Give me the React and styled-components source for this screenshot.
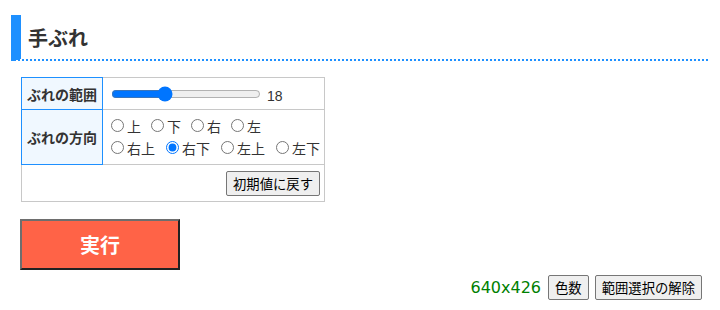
import React, { useState } from "react";
import styled, { createGlobalStyle } from "styled-components";

const Global = createGlobalStyle`
  html, body { margin: 0; padding: 0; background: #fff; }
  body {
    font-family: "Noto Sans CJK JP", "Noto Sans", sans-serif;
    font-size: 14px;
    color: #333;
  }
`;

const Page = styled.div`
  padding: 15px 12px 0 11px;
`;

const Heading = styled.h2`
  margin: 0;
  height: 44px;
  display: flex;
  align-items: center;
  padding-left: 7px;
  border-left: 10px solid #1e90ff;
  border-bottom: 2px dotted #1e90ff;
  font-size: 20px;
  font-weight: bold;
  color: #333;
`;

const Table = styled.table`
  margin: 16px 0 0 10px;
  border-collapse: collapse;
  width: 304px;
`;

const Th = styled.th`
  width: 70px;
  border: 1px solid #1e90ff;
  background: #f0f8ff;
  padding: 0 5px;
  font-size: 14px;
  font-weight: bold;
  text-align: left;
  white-space: nowrap;
  color: #333;
`;

const Td = styled.td`
  border: 1px solid #c8c8c8;
  padding: ${(p) => p.$pad || "5px 4px"};
  text-align: ${(p) => p.$align || "left"};
  height: ${(p) => p.$h || "auto"};
  box-sizing: border-box;
`;

const SliderRow = styled.div`
  display: flex;
  align-items: center;
  height: 21px;
`;

const Range = styled.input`
  width: 150px;
  margin: 0 6px 0 4px;
  accent-color: #0075ff;
`;

const Value = styled.span`
  font-family: "Liberation Sans", sans-serif;
  font-size: 14px;
  color: #333;
  padding-top: 4px;
`;

const RadioLine = styled.div`
  line-height: 22px;
  white-space: nowrap;
  display: flex;
  gap: ${(p) => p.$gap || "5px"};
`;

const RadioLabel = styled.label`
  font-size: 14px;
  color: #333;
  display: inline-flex;
  align-items: center;
  input {
    width: 13px;
    height: 13px;
    margin: 0 3px 0 5px;
  }
`;

const NativeButton = styled.button`
  font-family: "Noto Sans CJK JP", sans-serif;
  font-size: 13.33px;
  height: 25px;
  padding: 0 6px;
  border: 1px solid #767676;
  border-radius: 2px;
  background: #efefef;
  color: #000;
`;

const RunButton = styled.button`
  display: block;
  margin: 17px 0 0 9px;
  width: 160px;
  height: 51px;
  background: #ff6347;
  color: #fff;
  font-family: "Noto Sans CJK JP", sans-serif;
  font-size: 20px;
  font-weight: bold;
  border: 2px solid;
  border-color: #6e6e6e #222 #222 #6e6e6e;
`;

const Footer = styled.div`
  display: flex;
  justify-content: flex-end;
  align-items: center;
  gap: 6px;
  margin: 5px 6px 0 0;
`;

const Size = styled.span`
  color: #008000;
  font-family: "DejaVu Sans", "Liberation Sans", sans-serif;
  font-size: 16px;
  margin-right: 1px;
`;

const dirs1 = ["上", "下", "右", "左"];
const dirs2 = ["右上", "右下", "左上", "左下"];

export default function App() {
  const [val, setVal] = useState(18);
  const [dir, setDir] = useState("右下");
  return (
    <Page>
      <Global />
      <Heading>手ぶれ</Heading>
      <Table>
        <tbody>
          <tr>
            <Th>ぶれの範囲</Th>
            <Td $h="32px" $pad="3px 4px">
              <SliderRow>
                <Range
                  type="range"
                  min="1"
                  max="50"
                  value={val}
                  onChange={(e) => setVal(+e.target.value)}
                />
                <Value>{val}</Value>
              </SliderRow>
            </Td>
          </tr>
          <tr>
            <Th>ぶれの方向</Th>
            <Td $h="55px" $pad="4px 3px 5px">
              <RadioLine $gap="5px">
                {dirs1.map((d) => (
                  <RadioLabel key={d}>
                    <input type="radio" name="dir" checked={dir === d} onChange={() => setDir(d)} />
                    {d}
                  </RadioLabel>
                ))}
              </RadioLine>
              <RadioLine $gap="6px">
                {dirs2.map((d) => (
                  <RadioLabel key={d}>
                    <input type="radio" name="dir" checked={dir === d} onChange={() => setDir(d)} />
                    {d}
                  </RadioLabel>
                ))}
              </RadioLine>
            </Td>
          </tr>
          <tr>
            <Td colSpan={2} $align="right" $h="37px" $pad="5px 4px">
              <NativeButton>初期値に戻す</NativeButton>
            </Td>
          </tr>
        </tbody>
      </Table>
      <RunButton>実行</RunButton>
      <Footer>
        <Size>640x426</Size>
        <NativeButton>色数</NativeButton>
        <NativeButton>範囲選択の解除</NativeButton>
      </Footer>
    </Page>
  );
}
